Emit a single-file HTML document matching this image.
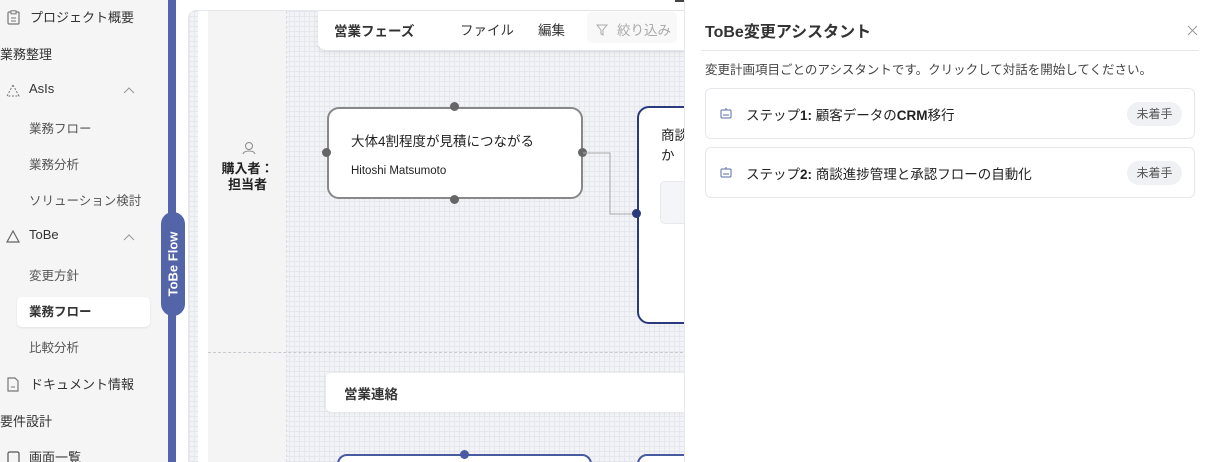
<!DOCTYPE html>
<html style="width:1209px;height:462px;overflow:hidden"><head><meta charset="utf-8"><style>
*{box-sizing:border-box;margin:0;padding:0}
html,body{width:1209px;height:462px;overflow:hidden}
body{position:relative;background:#fff;font-family:"Liberation Sans","Noto Sans CJK JP",sans-serif;color:#222}
.abs{position:absolute}
.side{left:0;top:0;width:168px;height:462px;background:#f5f5f5;overflow:hidden}
.si{position:absolute;font-size:13px;color:#333;white-space:nowrap}
.sub{color:#555;font-size:12.5px}
.grid{background-color:#f2f3f6;background-image:linear-gradient(#e5e7ec 1px,transparent 1px),linear-gradient(90deg,#e5e7ec 1px,transparent 1px);background-size:5px 5px}
.dot{position:absolute;width:9px;height:9px;border-radius:50%;background:#666}
.clip{position:absolute;left:176px;top:0;width:508px;height:462px;overflow:hidden;background:#fff}
</style></head><body>
<div class="abs side">
 <svg class="abs" style="left:7px;top:10px" width="13" height="15" viewBox="0 0 13 15"><rect x="1" y="2" width="11" height="12" rx="1" fill="none" stroke="#777" stroke-width="1.2"/><rect x="4" y="0.8" width="5" height="3" fill="#f5f5f5" stroke="#777" stroke-width="1"/><path d="M4 8h5M4 11h5" stroke="#777"/></svg>
 <div class="si" style="left:30px;top:7px">プロジェクト概要</div>
 <div class="si" style="left:0;top:44px">業務整理</div>
 <svg class="abs" style="left:6px;top:84px" width="14" height="13"><path d="M7 1L1 12h12z" fill="none" stroke="#777" stroke-dasharray="2 1.5"/></svg>
 <div class="si" style="left:29px;top:81px">AsIs</div>
 <svg class="abs" style="left:123px;top:87px" width="12" height="7"><path d="M1 6l5-5 5 5" fill="none" stroke="#999"/></svg>
 <div class="si sub" style="left:29px;top:118px">業務フロー</div>
 <div class="si sub" style="left:29px;top:154px">業務分析</div>
 <div class="si sub" style="left:29px;top:190px">ソリューション検討</div>
 <svg class="abs" style="left:6px;top:230px" width="14" height="13"><path d="M7 1L1 12h12z" fill="none" stroke="#666" stroke-width="1.2"/></svg>
 <div class="si" style="left:29px;top:227px">ToBe</div>
 <svg class="abs" style="left:123px;top:234px" width="12" height="7"><path d="M1 6l5-5 5 5" fill="none" stroke="#999"/></svg>
 <div class="si sub" style="left:29px;top:265px">変更方針</div>
 <div class="abs" style="left:17px;top:297px;width:133px;height:30px;background:#fff;border-radius:5px;box-shadow:0 1px 2px rgba(0,0,0,.08)"></div>
 <div class="si" style="left:29px;top:301px;font-weight:bold;font-size:12.5px">業務フロー</div>
 <div class="si sub" style="left:29px;top:337px">比較分析</div>
 <svg class="abs" style="left:7px;top:377px" width="12" height="15"><path d="M1 1h7l3 3v10H1z" fill="none" stroke="#777" stroke-width="1.2"/><path d="M4 10h4" stroke="#777"/></svg>
 <div class="si" style="left:30px;top:374px">ドキュメント情報</div>
 <div class="si" style="left:0;top:411px">要件設計</div>
 <svg class="abs" style="left:7px;top:451px" width="13" height="13"><rect x="1" y="1" width="11" height="11" rx="1.5" fill="none" stroke="#555" stroke-width="1.2"/></svg>
 <div class="si" style="left:29px;top:447px">画面一覧</div>
</div>
<div class="abs" style="left:168px;top:0;width:8px;height:462px;background:#5464a8"></div>
<div class="clip">
<div class="abs grid" style="left:12px;top:10px;width:500px;height:460px;border-radius:8px 0 0 0;border:1px solid #e6e7ea"></div>
<div class="abs" style="left:22px;top:11px;width:10px;height:451px;background:#fff"></div>
<div class="abs" style="left:32px;top:11px;width:79px;height:451px;background:#f4f4f5;border-right:1px dashed #dcdde2"></div>
<div class="abs" style="left:32px;top:352px;width:480px;border-top:1px dashed #c8cad0"></div>
<svg class="abs" style="left:66px;top:141px" width="14" height="14"><circle cx="7" cy="5" r="3.5" fill="none" stroke="#888"/><path d="M1 13c1-4 11-4 12 0" fill="none" stroke="#888"/></svg>
<div class="abs" style="left:34px;top:161px;width:75px;text-align:center;font-size:13px;font-weight:bold;line-height:16px">購入者：<br>担当者</div>
<div class="abs" style="left:142px;top:11px;width:370px;height:39px;background:#fff;border-radius:0 0 0 8px;box-shadow:0 2px 6px rgba(0,0,0,.08)"></div>
<div class="abs" style="left:158px;top:20px;font-size:13.5px;font-weight:bold;color:#333">営業フェーズ</div>
<div class="abs" style="left:284px;top:19px;font-size:13.5px;color:#333">ファイル</div>
<div class="abs" style="left:362px;top:19px;font-size:13.5px;color:#333">編集</div>
<div class="abs" style="left:411px;top:12px;width:90px;height:31px;background:#f8f8f9;border-radius:5px"></div>
<svg class="abs" style="left:420px;top:24px" width="12" height="12"><path d="M1 1h10L7 6v5L5 10V6z" fill="none" stroke="#aaa"/></svg>
<div class="abs" style="left:441px;top:19px;font-size:13.5px;color:#aaa;white-space:nowrap">絞り込み</div>
<div class="abs" style="left:151px;top:107px;width:256px;height:92px;background:#fff;border:2px solid #888;border-radius:12px"></div>
<div class="abs" style="left:175px;top:130px;font-size:13.5px;color:#222;white-space:nowrap">大体4割程度が見積につながる</div>
<div class="abs" style="left:175px;top:165px;font-size:11.5px;color:#222;white-space:nowrap">Hitoshi Matsumoto</div>
<div class="dot" style="left:274px;top:102px"></div><div class="dot" style="left:274px;top:195px"></div>
<div class="dot" style="left:146px;top:148px"></div><div class="dot" style="left:402px;top:148px"></div>
<svg class="abs" style="left:407px;top:150px" width="56" height="66"><path d="M0 3h27v61h28" fill="none" stroke="#aaa"/></svg>
<div class="abs" style="left:461px;top:106px;width:60px;height:218px;background:#fff;border:2px solid #2a3a7c;border-radius:12px"></div>
<div class="abs" style="left:485px;top:126px;font-size:13.5px;line-height:20px;white-space:nowrap">商談<br>か</div>
<div class="abs" style="left:484px;top:181px;width:30px;height:43px;background:#f4f5f9;border:1px solid #e6e8ee;border-radius:5px"></div>
<div class="dot" style="left:456px;top:209px;background:#2a3a7c"></div>
<div class="abs" style="left:150px;top:373px;width:362px;height:39px;background:#fff;border-radius:5px 0 0 5px;box-shadow:0 1px 4px rgba(0,0,0,.06)"></div>
<div class="abs" style="left:168px;top:383px;font-size:13.5px;font-weight:bold;color:#333">営業連絡</div>
<div class="abs" style="left:161px;top:454px;width:255px;height:20px;border:2px solid #4a5aa0;border-radius:10px;background:#fff"></div>
<div class="abs" style="left:461px;top:454px;width:60px;height:20px;border:2px solid #4a5aa0;border-radius:10px;background:#fff"></div>
<div class="dot" style="left:284px;top:450px;background:#4a5aa0"></div>
</div>
<div class="abs" style="left:161px;top:212px;width:24px;height:104px;background:#5464a8;border-radius:12px"></div>
<div class="abs" style="left:173px;top:264px;transform:translate(-50%,-50%) rotate(-90deg);color:#fff;font-weight:bold;font-size:13px;white-space:nowrap">ToBe Flow</div>
<div class="abs" style="left:675px;top:0;width:30px;height:2px;background:#444"></div>
<div class="abs" style="left:684px;top:0;width:525px;height:462px;background:#fff;border-left:1px solid #e8e8ec"></div>
<div class="abs" style="left:705px;top:18px;font-size:16px;font-weight:bold;color:#333">ToBe変更アシスタント</div>
<svg class="abs" style="left:1187px;top:25px" width="11" height="11"><path d="M1 1l9 9M10 1l-9 9" stroke="#999"/></svg>
<div class="abs" style="left:701px;top:50px;width:498px;border-top:1px solid #e6e7eb"></div>
<div class="abs" style="left:705px;top:59px;font-size:12.5px;color:#444">変更計画項目ごとのアシスタントです。クリックして対話を開始してください。</div>
<div class="abs" style="left:705px;top:88px;width:490px;height:51px;border:1px solid #e6e7eb;border-radius:6px"></div>
<div class="abs" style="left:705px;top:147px;width:490px;height:51px;border:1px solid #e6e7eb;border-radius:6px"></div>
<svg class="abs" style="left:720px;top:107px" width="12" height="12"><rect x="1" y="3" width="10" height="8" rx="1" fill="none" stroke="#5a6aa8"/><path d="M6 1v2M3 8h6" stroke="#5a6aa8"/></svg>
<svg class="abs" style="left:720px;top:166px" width="12" height="12"><rect x="1" y="3" width="10" height="8" rx="1" fill="none" stroke="#5a6aa8"/><path d="M6 1v2M3 8h6" stroke="#5a6aa8"/></svg>
<div class="abs" style="left:746px;top:104px;font-size:13.5px;color:#222">ステップ<b>1:</b> 顧客データの<b>CRM</b>移行</div>
<div class="abs" style="left:746px;top:163px;font-size:13.5px;color:#222">ステップ<b>2:</b> 商談進捗管理と承認フローの自動化</div>
<div class="abs" style="left:1127px;top:102px;width:55px;height:24px;background:#f0f1f4;border-radius:12px;font-size:12px;color:#555;text-align:center;line-height:24px">未着手</div>
<div class="abs" style="left:1127px;top:161px;width:55px;height:24px;background:#f0f1f4;border-radius:12px;font-size:12px;color:#555;text-align:center;line-height:24px">未着手</div>
</body></html>
